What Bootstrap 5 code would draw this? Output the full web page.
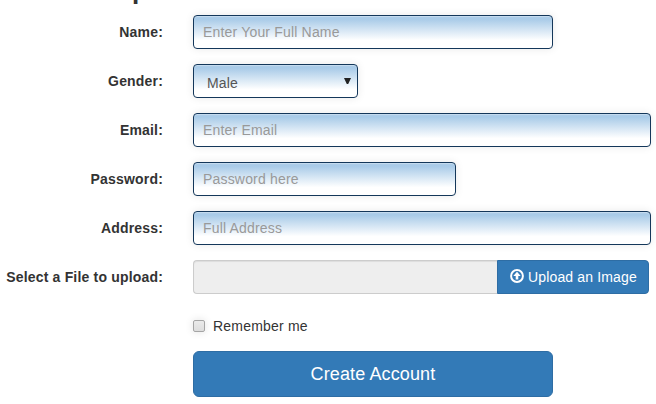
<!DOCTYPE html>
<html lang="en">
<head>
<meta charset="utf-8">
<title>Create Account</title>
<link rel="stylesheet" href="https://cdn.jsdelivr.net/npm/bootstrap@5.3.0/dist/css/bootstrap.min.css">
<style>
body{width:656px;height:404px;overflow:hidden;background:#fff;color:#333;font:14px/20px "Liberation Sans",Arial,sans-serif}
.heading-strip{height:15px;padding-left:132px}
.heading-strip h1{font-size:26px;line-height:24px;margin:-22px 0 0;font-weight:700;color:#333}
.field-row{height:34px;margin-bottom:15px}
.field-label{width:163px;font-weight:700;line-height:20px;padding-top:7px;white-space:nowrap;flex:none;margin-right:30px;letter-spacing:.18px}
.field{height:34px;padding:6px 9px;font-size:14px;line-height:20px;color:#555;border:1px solid #14375a;border-radius:4px;background:linear-gradient(#a9cbe8 0,#a9cbe8 10%,#fff 76%);box-shadow:inset 0 1px 1px rgba(255,255,255,.35),0 0 8px rgba(0,0,0,.09);letter-spacing:.18px}
.field::placeholder{color:#999;opacity:1}
.w-name{width:360px}.w-gender{width:165px}.w-full{width:458px}.w-pass{width:263px}
.gender{padding:8px 6px 4px 13px}
.gender svg{width:7px;height:6px;margin-top:5px}
.file-name,.file-name:disabled{width:304px;flex:none;height:34px;background:#eee;border:1px solid #ccc;border-right:0;border-radius:4px 0 0 4px;padding:0;box-shadow:inset 0 1px 1px rgba(0,0,0,.075)}
.upload{width:152px;height:34px;background:#337ab7;border:1px solid #2e6da4;border-radius:0 4px 4px 0;color:#fff;font-size:14px;line-height:20px;padding:6px 12px;white-space:nowrap;letter-spacing:.15px}
.upload svg{width:14px;height:14px;margin:-2px 4px 0 0;flex:none}
.remember{margin:22px 0 0 193px;height:20px;line-height:20px;letter-spacing:.2px}
.tick{width:12px;height:12px;margin:0 8px 0 0;border:1px solid #a5a5a5;border-radius:2px;background:linear-gradient(#eaeaea,#ddd);box-shadow:0 0 8px rgba(0,0,0,.12)}
.remember .tick{border-radius:2px}
.create{width:360px;height:46px;margin:15px 0 0 193px;background:#337ab7;border:1px solid #2e6da4;border-radius:6px;color:#fff;font-size:18px;line-height:24px;padding:10px 16px;letter-spacing:.12px}
</style>
<script src="https://cdn.jsdelivr.net/npm/bootstrap@5.3.0/dist/js/bootstrap.bundle.min.js"></script>
</head>
<body>
<form>
<div class="heading-strip overflow-hidden"><h1>p</h1></div>
<div class="field-row d-flex"><label class="field-label text-end" for="name">Name:</label><input id="name" class="form-control field w-name" placeholder="Enter Your Full Name"></div>
<div class="field-row d-flex"><label class="field-label text-end">Gender:</label><div class="field w-gender gender d-flex justify-content-between" role="combobox"><span>Male</span><svg viewBox="0 0 7 6"><path fill="#222" d="M0 0h7L4.2 6H2.8z"/></svg></div></div>
<div class="field-row d-flex"><label class="field-label text-end" for="email">Email:</label><input id="email" class="form-control field w-full" placeholder="Enter Email"></div>
<div class="field-row d-flex"><label class="field-label text-end" for="pass">Password:</label><input id="pass" type="password" class="form-control field w-pass" placeholder="Password here"></div>
<div class="field-row d-flex"><label class="field-label text-end" for="addr">Address:</label><input id="addr" class="form-control field w-full" placeholder="Full Address"></div>
<div class="field-row d-flex mb-0"><label class="field-label text-end">Select a File to upload:</label><input class="form-control file-name" disabled aria-label="File name"><button type="button" class="btn upload d-flex align-items-center"><svg viewBox="0 0 14 14"><circle cx="7" cy="7" r="5.9" fill="none" stroke="#fff" stroke-width="2"/><path fill="#fff" d="M7 2.8 10.7 7H8.3v3.6H5.7V7H3.3z"/></svg><span>Upload an Image</span></button></div>
<div class="remember d-flex align-items-center"><input id="rem" type="checkbox" class="form-check-input tick"><label for="rem">Remember me</label></div>
<button type="button" class="btn create d-block">Create Account</button>
</form>
</body>
</html>
